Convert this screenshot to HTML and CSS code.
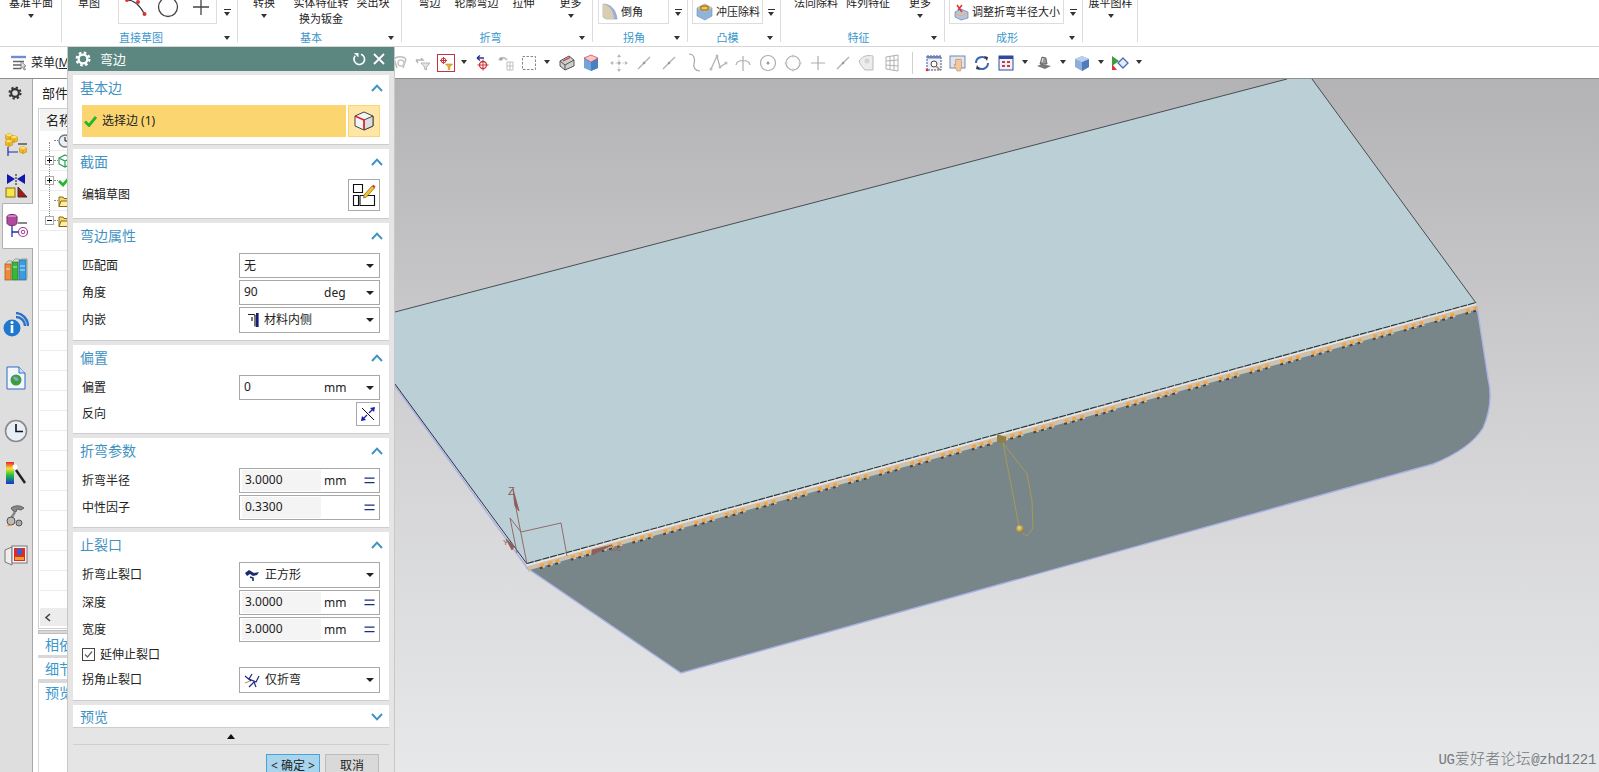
FILE: index.html
```html
<!DOCTYPE html>
<html lang="zh-CN">
<head>
<meta charset="utf-8">
<title>弯边</title>
<link rel="stylesheet" href="styles.css">
</head>
<body>
<svg class="sprite" aria-hidden="true">
  <symbol id="gear" viewBox="0 0 16 16"><circle cx="8" cy="8" r="4.4" fill="none" stroke="currentColor" stroke-width="2.4"/><circle cx="8" cy="8" r="6.4" fill="none" stroke="currentColor" stroke-width="2.2" stroke-dasharray="2.6 2.42"/></symbol>
  <symbol id="chev-up" viewBox="0 0 12 8"><path d="M1 7 6 1.6 11 7" fill="none" stroke="#3f93c3" stroke-width="2"/></symbol>
  <symbol id="chev-down" viewBox="0 0 12 8"><path d="M1 1 6 6.4 11 1" fill="none" stroke="#3f93c3" stroke-width="2"/></symbol>
  <symbol id="eq" viewBox="0 0 11 7"><path d="M.5 1.2h10M.5 5.6h10" stroke="#1b2f7a" stroke-width="1.3"/></symbol>
  <symbol id="folder" viewBox="0 0 14 14"><path d="M1 3h4l1 1.500h4v8H1z" fill="#f8d66a" stroke="#8a6a10"/><path d="M3 7h10l-2 5.500H1z" fill="#fdeda6" stroke="#8a6a10"/></symbol>
  <symbol id="plus" viewBox="0 0 9 9"><rect x=".5" y=".5" width="8" height="8" fill="#fff" stroke="#aaa"/><path d="M2 4.500h5M4.500 2v5" stroke="#111"/></symbol>
  <symbol id="minus" viewBox="0 0 9 9"><rect x=".5" y=".5" width="8" height="8" fill="#fff" stroke="#aaa"/><path d="M2 4.500h5" stroke="#111"/></symbol>
  <symbol id="gline" viewBox="0 0 20 20"><path d="M4 16 16 4" stroke="#aeaeae" stroke-width="1.200"/><circle cx="10" cy="10" r="1.300" fill="#999"/></symbol>
  <symbol id="ycube" viewBox="0 0 10 10"><path d="M5 .5 9.500 2.500v5L5 9.500.5 7.500v-5z" fill="#f2b91e" stroke="#b07c10" stroke-width=".6"/><path d="M.5 2.500 5 4.500l4.500-2L5 .5z" fill="#fbe27a"/><path d="M5 4.500v5" stroke="#b07c10" stroke-width=".6"/></symbol>
</svg>

<header class="ribbon">
  <section class="group g1">
    <div class="tools">
      <div class="tool w62"><span class="tool-text">基准平面</span><i class="caret"></i></div>
    </div>
    <div class="group-label"></div>
  </section>
  <section class="group g2">
    <div class="tools">
      <div class="tool w54"><span class="tool-text">草图</span></div>
      <div class="box sketch-box">
        <svg width="99" height="24" viewBox="0 0 99 24">
          <path d="M8 0C14 0 20 4 25.500 14" fill="none" stroke="#333" stroke-width="1.200"/>
          <circle cx="8" cy="0" r="2" fill="#d8343a"/><circle cx="19" cy="2" r="2" fill="#d8343a"/><circle cx="25.500" cy="14" r="2" fill="#d8343a"/>
          <circle cx="49" cy="7" r="9.500" fill="none" stroke="#444" stroke-width="1.300"/>
          <path d="M74 7h16M82 -1v16" stroke="#444" stroke-width="1.300"/>
        </svg>
      </div>
      <div class="more-cell"><i class="more-line"></i></div>
    </div>
    <div class="group-label"><span>直接草图</span><i class="caret"></i></div>
  </section>
  <section class="group g3">
    <div class="tools">
      <div class="tool w52"><span class="tool-text">转换</span><i class="caret"></i></div>
      <div class="tool w62"><span class="tool-text wrap">实体特征转换为钣金</span></div>
      <div class="tool w42"><span class="tool-text">突出块</span></div>
    </div>
    <div class="group-label"><span>基本</span><i class="caret"></i></div>
  </section>
  <section class="group g4">
    <div class="tools">
      <div class="tool w47"><span class="tool-text">弯边</span></div>
      <div class="tool w47"><span class="tool-text">轮廓弯边</span></div>
      <div class="tool w47"><span class="tool-text">拉伸</span></div>
      <div class="tool w47"><span class="tool-text">更多</span><i class="caret"></i></div>
    </div>
    <div class="group-label"><span>折弯</span><i class="caret"></i></div>
  </section>
  <section class="group g5">
    <div class="tools">
      <div class="box combo w71">
        <svg width="16" height="18" viewBox="0 0 16 18"><path d="M1 1C8 1 14 6 15 16H4L1 14z" fill="#9db4d8" stroke="#8090b8" stroke-width=".6"/><path d="M1 1C7 2 11 7 12 16H4L1 14z" fill="#d9cdb0"/></svg>
        <span>倒角</span>
      </div>
      <div class="more-cell"><i class="more-line"></i></div>
    </div>
    <div class="group-label"><span>拐角</span><i class="caret"></i></div>
  </section>
  <section class="group g6">
    <div class="tools">
      <div class="box combo w71">
        <svg width="17" height="18" viewBox="0 0 17 18"><path d="M1 5 9 1l7 4v8l-7 4-8-4z" fill="#8fb4dc" stroke="#7090b8" stroke-width=".6"/><path d="M1 5 9 1l7 4-7 4z" fill="#e8c46e"/><ellipse cx="8.500" cy="5" rx="4" ry="2.200" fill="none" stroke="#a87620" stroke-width="1.300"/></svg>
        <span>冲压除料</span>
      </div>
      <div class="more-cell"><i class="more-line"></i></div>
    </div>
    <div class="group-label"><span>凸模</span><i class="caret"></i></div>
  </section>
  <section class="group g7">
    <div class="tools">
      <div class="tool w52"><span class="tool-text">法向除料</span></div>
      <div class="tool w52"><span class="tool-text">阵列特征</span></div>
      <div class="tool w52"><span class="tool-text">更多</span><i class="caret"></i></div>
    </div>
    <div class="group-label"><span>特征</span><i class="caret"></i></div>
  </section>
  <section class="group g8">
    <div class="tools">
      <div class="box combo w115">
        <svg width="16" height="18" viewBox="0 0 16 18"><path d="M2 9 8 6l7 3v6l-7 2-6-3z" fill="#b8c4de" stroke="#6c7ca8" stroke-width=".7"/><path d="M4 2 9 9M9 2 5 7" stroke="#d8343a" stroke-width="1.500"/><path d="M3 11l5 2 6-3" fill="none" stroke="#e7b35a"/></svg>
        <span>调整折弯半径大小</span>
      </div>
      <div class="more-cell"><i class="more-line"></i></div>
    </div>
    <div class="group-label"><span>成形</span><i class="caret"></i></div>
  </section>
  <section class="group g9">
    <div class="tools">
      <div class="tool w55"><span class="tool-text">展平图样</span><i class="caret"></i></div>
    </div>
    <div class="group-label"></div>
  </section>
</header>

<nav class="toolbar">
  <div class="tb-menu">
    <svg width="18" height="16" viewBox="0 0 18 16"><path d="M1 2h15" stroke="#6d8fd0" stroke-width="2.400"/><path d="M3 6.500h11M3 10h9M3 13.500h8" stroke="#666" stroke-width="1.400"/><path d="M11 6l5 5-2 .5 1.500 3-1.500.5-1.300-3-1.700 1.500z" fill="#ddd" stroke="#555" stroke-width=".6"/></svg>
    <span>菜单(<u>M</u>)</span>
  </div>
  <div class="tb-icons">
    <span class="ti"><svg width="18" height="18" viewBox="0 0 18 18"><path d="M3 5c3-3 9-3 12 0M3 5l3 9M15 5l-3 9" fill="none" stroke="#bdbdbd" stroke-width="1.500"/><circle cx="10" cy="9" r="3" fill="none" stroke="#c8c8c8" stroke-width="1.500"/></svg></span>
    <span class="ti"><svg width="18" height="18" viewBox="0 0 18 18"><path d="M2 6h7l-2-2M2 6l2 3" fill="none" stroke="#b4b4b4" stroke-width="1.400"/><path d="M7 9h9l-3.500 4v3l-2-1v-2z" fill="#e5e5e5" stroke="#b4b4b4"/></svg></span>
    <span class="ti"><svg class="framed" width="16" height="16" viewBox="0 0 16 16"><path d="M5.500 2v7M2 5.500h7" stroke="#c43a3a"/><circle cx="5.500" cy="5.500" r="2.400" fill="none" stroke="#c43a3a"/><path d="M7.500 9h7l-2.700 3v2.500h-1.500V12z" fill="#e8b22e" stroke="#a87a10" stroke-width=".5"/></svg></span>
    <i class="tc"></i>
    <span class="ti"><svg width="18" height="18" viewBox="0 0 18 18"><path d="M3 4h7M3 4l3-2.500M3 4l3 2.500" fill="none" stroke="#233a8c" stroke-width="1.400"/><circle cx="9" cy="11" r="3.500" fill="none" stroke="#c8323a" stroke-width="1.300"/><path d="M9 5.500v11M3.500 11h11" stroke="#c8323a"/></svg></span>
    <span class="ti"><svg width="18" height="18" viewBox="0 0 18 18"><path d="M2 6c2-3 6-3 8 0" fill="none" stroke="#c4c4c4" stroke-width="2"/><circle cx="4" cy="5" r="1.800" fill="#aaa"/><path d="M10 8h6v8h-6zM10 12h6M13 8v8" fill="none" stroke="#c0c0c0"/></svg></span>
    <span class="ti"><svg width="16" height="16" viewBox="0 0 16 16"><rect x="1.500" y="1.500" width="13" height="13" fill="none" stroke="#888" stroke-dasharray="2.500 1.500"/></svg></span>
    <i class="tc"></i>
  </div>
  <div class="tb-icons tb-cubes">
    <span class="ti24"><svg width="18" height="18" viewBox="0 0 18 18"><path d="M2 7 11 2l5 4v6l-9 4-5-4z" fill="#cfcfcf" stroke="#555"/><path d="M2 7l5 4 9-5M7 11v5" fill="none" stroke="#555"/><path d="M5 7l7-3.500" stroke="#d8343a" stroke-width="1.300"/></svg></span>
    <span class="ti24"><svg width="18" height="18" viewBox="0 0 18 18"><path d="M2 4 9 1l7 3v10l-7 3-7-3z" fill="#6fa6dc"/><path d="M9 8 16 4v10l-7 3z" fill="#4a7fc0"/><path d="M2 4 9 1l7 3-7 4z" fill="#f3c8c8" stroke="#d8343a" stroke-width=".6"/></svg></span>
  </div>
  <div class="tb-icons tb-grey">
    <span class="tw"><svg width="20" height="20" viewBox="0 0 20 20"><path d="M10 3v14M3 10h14" stroke="#ccc" stroke-dasharray="2 1.500"/><path d="M10 1l2 3h-4zM10 19l2-3h-4zM1 10l3-2v4zM19 10l-3-2v4z" fill="#b8b8b8"/><circle cx="10" cy="10" r="1.500" fill="#aaa"/></svg></span>
    <span class="tw"><svg width="20" height="20"><use href="#gline"/></svg></span>
    <span class="tw"><svg width="20" height="20"><use href="#gline"/></svg></span>
    <span class="tw"><svg width="20" height="20" viewBox="0 0 20 20"><path d="M5 1c6 0 6 7 5 10s1 7 6 7" fill="none" stroke="#a8a8a8" stroke-width="1.200"/></svg></span>
    <span class="tw"><svg width="20" height="20" viewBox="0 0 20 20"><path d="M2 16 8 3l3 11 6-4" fill="none" stroke="#aeaeae" stroke-width="1.200"/><circle cx="8" cy="3" r="1.500" fill="#bbb"/><circle cx="11" cy="14" r="1.500" fill="#bbb"/><circle cx="17" cy="10" r="1.500" fill="#bbb"/><circle cx="2" cy="16" r="1.500" fill="#bbb"/></svg></span>
    <span class="tw"><svg width="20" height="20" viewBox="0 0 20 20"><path d="M3 12c1-6 13-6 14 0M10 3v15" fill="none" stroke="#aeaeae" stroke-width="1.200"/></svg></span>
    <span class="tw"><svg width="20" height="20" viewBox="0 0 20 20"><circle cx="10" cy="10" r="7.500" fill="none" stroke="#aeaeae" stroke-width="1.200"/><circle cx="10" cy="10" r="1.500" fill="#999"/></svg></span>
    <span class="tw"><svg width="20" height="20" viewBox="0 0 20 20"><circle cx="10" cy="10" r="7" fill="none" stroke="#aeaeae" stroke-width="1.200"/><circle cx="10" cy="3" r="1.500" fill="#ccc"/><circle cx="17" cy="10" r="1.500" fill="#ccc"/><circle cx="10" cy="17" r="1.500" fill="#ccc"/><circle cx="3" cy="10" r="1.500" fill="#ccc"/></svg></span>
    <span class="tw"><svg width="20" height="20" viewBox="0 0 20 20"><path d="M10 3v14M3 10h14" stroke="#aeaeae" stroke-width="1.200"/></svg></span>
    <span class="tw"><svg width="20" height="20"><use href="#gline"/></svg></span>
    <span class="tw"><svg width="20" height="20" viewBox="0 0 20 20"><path d="M2 8c4-6 10-6 14-5v14H8C5 14 3 11 2 8z" fill="#ececec" stroke="#bbb"/><circle cx="10" cy="8" r="2.500" fill="#d4d4d4"/></svg></span>
    <span class="tw"><svg width="20" height="20" viewBox="0 0 20 20"><path d="M4 4l12-2v16l-12-2zM8 3.500v13M12 3v14M4 8l12-1M4 12l12 1" fill="none" stroke="#b0b0b0"/></svg></span>
  </div>
  <i class="tb-sep"></i>
  <div class="tb-icons">
    <span class="ti24"><svg width="18" height="18" viewBox="0 0 18 18"><rect x="2" y="2" width="14" height="14" fill="#eef2f8" stroke="#3b4fa8" stroke-dasharray="2 1"/><rect x="2" y="2" width="14" height="2.500" fill="#6d80b8"/><circle cx="9" cy="10" r="3" fill="#fff" stroke="#444"/><path d="M11 12l4 4" stroke="#b88a30" stroke-width="1.600"/><circle cx="2" cy="16" r="1.300" fill="#d8343a"/></svg></span>
    <span class="ti24"><svg width="18" height="18" viewBox="0 0 18 18"><rect x="1" y="2" width="15" height="12" fill="#dfe5f0" stroke="#7a88a8"/><path d="M8 17 5 11c0-1 1-1 1.500 0V6c0-1 1.500-1 1.500 0 0-1 1.500-1 1.500 0 0-1 1.500-1 1.500 0 0-1 1.500-1 1.500 .5V13l-1 4z" fill="#f2c89a" stroke="#a87a50" stroke-width=".5"/></svg></span>
    <span class="ti24"><svg width="18" height="18" viewBox="0 0 18 18"><path d="M3 9a6 6 0 0 1 10-4.500M15 9a6 6 0 0 1-10 4.500" fill="none" stroke="#3c66b8" stroke-width="2"/><path d="M11 2l4 1-1 4zM7 16l-4-1 1-4z" fill="#333"/></svg></span>
    <span class="ti24"><svg width="18" height="18" viewBox="0 0 18 18"><rect x="2" y="2" width="14" height="14" fill="#eef2fa" stroke="#334a9c"/><rect x="2" y="2" width="14" height="3" fill="#334a9c"/><path d="M5 7h3v2H5zM10 7h3v2h-3zM5 11h3v2H5zM10 11h3v2h-3z" fill="#d8343a"/></svg></span>
    <i class="tc wide"></i>
    <span class="ti18"><svg width="18" height="18" viewBox="0 0 18 18"><path d="M2 12l5-2 9 2-6 3z" fill="#777"/><path d="M5 10l2-7 4 1 1 6z" fill="#999" stroke="#444" stroke-width=".7"/><path d="M8 4l-1 4" stroke="#eee"/></svg></span>
    <i class="tc wide"></i>
    <span class="ti18"><svg width="18" height="18" viewBox="0 0 18 18"><path d="M2 5l7-3 7 3v8l-7 4-7-4z" fill="#8eaedc"/><path d="M9 8l7-3v8l-7 4z" fill="#4f7bbd"/><path d="M2 5l7-3 7 3-7 3z" fill="#bcd0ee"/></svg></span>
    <i class="tc wide"></i>
    <span class="ti18"><svg width="18" height="18" viewBox="0 0 18 18"><path d="M1 2l7 5-7 5z" fill="#3f9c3f"/><path d="M1 10l5 6H1z" fill="#d8343a"/><path d="M12 4l5 5-5 5-5-5z" fill="#e4ecfa" stroke="#4a6bb8" stroke-width="1.300"/></svg></span>
    <i class="tc wide"></i>
  </div>
</nav>

<main class="workspace">
  <aside class="resource-bar">
    <span class="res r-gear"><svg class="dark" width="14" height="14"><use href="#gear"/></svg></span>
    <span class="res r-41"><svg width="24" height="24" viewBox="0 0 24 24"><use href="#ycube" x="1" y="0" width="8" height="8"/><use href="#ycube" x="6" y="2" width="8" height="8"/><use href="#ycube" x="1" y="6" width="8" height="8"/><use href="#ycube" x="15" y="13" width="8" height="8"/><path d="M4 14v9M4 19h10" stroke="#1b2fb0" stroke-width="1.200"/><path d="M14 11h9" stroke="#111"/></svg></span>
    <span class="res r-41"><svg width="24" height="24" viewBox="0 0 24 24"><path d="M3 0l8 5-8 5zM21 0l-8 5 8 5z" fill="#1416b0"/><path d="M12 0v12" stroke="#111" stroke-dasharray="2 1"/><rect x="2" y="14" width="9" height="9" fill="#f6e64a" stroke="#8a6a10"/><path d="M14 23V13l9 10z" fill="#b01418" stroke="#333"/></svg></span>
    <span class="res r-tab"><svg width="24" height="26" viewBox="0 0 24 26"><ellipse cx="7" cy="4" rx="5" ry="2.500" fill="#d08ac0" stroke="#7a2a70"/><path d="M2 4v6c0 1.500 2 2.500 5 2.500s5-1 5-2.500V4" fill="#b04a9c" stroke="#7a2a70"/><path d="M7 13v11M7 19h6" stroke="#1b2fb0" stroke-width="1.300"/><path d="M13 10h9" stroke="#111"/><circle cx="18" cy="19" r="4.500" fill="none" stroke="#a03a90" stroke-width="1.200"/><circle cx="18" cy="19" r="1.800" fill="none" stroke="#a03a90"/></svg></span>
    <span class="res r-42"><svg width="24" height="24" viewBox="0 0 24 24"><rect x="1" y="6" width="6" height="16" fill="#ef8a3a" stroke="#a0551a" stroke-width=".7"/><rect x="8" y="4" width="6" height="18" fill="#3cb43c" stroke="#1f7a1f" stroke-width=".7"/><rect x="15" y="2" width="7" height="20" fill="#3d9ce0" stroke="#1f6aa0" stroke-width=".7"/><path d="M1 6l3-3h4M8 4l3-3h4M15 2l3-1h5v19l-1 2" fill="none" stroke="#6d8a6d" stroke-width=".7"/><path d="M16 8h5M16 12h5M9 9h4M2 11h4" stroke="#fff" stroke-width=".7"/></svg></span>
    <span class="res r-info"><svg width="26" height="26" viewBox="0 0 26 26"><path d="M13 5a9 9 0 0 1 9 9M13 1a13 13 0 0 1 12 13" fill="none" stroke="#2a72c8" stroke-width="2.400"/><circle cx="9" cy="16" r="8.500" fill="#1f78d0"/><circle cx="9" cy="10.500" r="1.500" fill="#fff"/><path d="M9 13v8" stroke="#fff" stroke-width="2.600"/></svg></span>
    <span class="res r-53"><svg width="20" height="24" viewBox="0 0 20 24"><path d="M1 1h12l6 6v16H1z" fill="#f2f6fd" stroke="#2a6ac8"/><path d="M13 1v6h6" fill="#cfe0f8" stroke="#2a6ac8"/><circle cx="10" cy="14" r="5.500" fill="#3f9c3f"/><path d="M7 11c3-1 5 0 6 3-2 2-5 1-6-3z" fill="#7aa6d8"/></svg></span>
    <span class="res r-53"><svg width="24" height="24" viewBox="0 0 24 24"><circle cx="12" cy="12" r="10.500" fill="#e8eef8" stroke="#8a8a8a" stroke-width="1.600"/><path d="M12 5v7.500h7" fill="none" stroke="#111" stroke-width="1.600"/></svg></span>
    <span class="res r-32"><svg width="22" height="24" viewBox="0 0 22 24"><defs><linearGradient id="rb" x1="0" y1="0" x2="0" y2="1"><stop offset="0" stop-color="#e8222a"/><stop offset=".3" stop-color="#f6e030"/><stop offset=".6" stop-color="#20c040"/><stop offset="1" stop-color="#1830d8"/></linearGradient></defs><rect x="1" y="1" width="8" height="22" fill="url(#rb)"/><path d="M11 9l9 13" stroke="#222" stroke-width="2.400"/><circle cx="10" cy="6" r="2.500" fill="#fff"/></svg></span>
    <span class="res r-54"><svg width="22" height="24" viewBox="0 0 22 24"><path d="M6 4c4-3 9-3 13 0l-3 2-4-1-1 3-3-1z" fill="#888" stroke="#444" stroke-width=".7"/><path d="M10 8 5 16" stroke="#888" stroke-width="2.400"/><circle cx="6" cy="17" r="4" fill="#bbb" stroke="#555"/><circle cx="14" cy="19" r="3" fill="#aaa" stroke="#555"/><path d="M1 22l5-2 1 2z" fill="#ee8a2a"/></svg></span>
    <span class="res r-26"><svg width="24" height="22" viewBox="0 0 24 22"><path d="M1 5l7-3v18l-7-3z" fill="#eee" stroke="#777"/><rect x="8" y="1" width="15" height="17" fill="#f4f4f4" stroke="#777"/><rect x="10" y="3" width="11" height="13" fill="#e02a2a"/><path d="M13 4h5v4l-2.500 3L13 8z" fill="#2a62d8"/><rect x="11" y="12" width="9" height="3" fill="#f0a030"/></svg></span>
  </aside>

  <aside class="nav">
    <div class="nav-title">部件导航器</div>
    <div class="tree">
      <div class="tree-head">名称</div>
      <div class="tree-rows">
        <div class="tr"><span class="tg"></span><span class="dots"></span><svg width="14" height="14" viewBox="0 0 14 14"><circle cx="7" cy="7" r="6" fill="#e8eef8" stroke="#777" stroke-width="1.300"/><path d="M7 3v4h3" fill="none" stroke="#111"/></svg></div>
        <div class="tr"><svg class="tg" width="9" height="9"><use href="#plus"/></svg><span class="dots"></span><svg width="14" height="14" viewBox="0 0 14 14"><path d="M7 1l6 3v6l-6 3-6-3V4zM1 4l6 3 6-3M7 7v6" fill="none" stroke="#20a050" stroke-width="1.200"/></svg></div>
        <div class="tr"><svg class="tg" width="9" height="9"><use href="#plus"/></svg><span class="dots"></span><svg width="14" height="14" viewBox="0 0 14 14"><path d="M1 7l4 4 7-8" fill="none" stroke="#24b82c" stroke-width="2.800"/></svg></div>
        <div class="tr"><span class="tg"></span><span class="dots"></span><svg width="14" height="14"><use href="#folder"/></svg></div>
        <div class="tr"><svg class="tg" width="9" height="9"><use href="#minus"/></svg><span class="dots"></span><svg width="14" height="14"><use href="#folder"/></svg></div>
        <div class="tr"></div><div class="tr"></div><div class="tr"></div><div class="tr"></div><div class="tr"></div>
        <div class="tr"></div><div class="tr"></div><div class="tr"></div><div class="tr"></div><div class="tr"></div>
        <div class="tr"></div><div class="tr"></div><div class="tr"></div><div class="tr"></div><div class="tr"></div>
        <div class="tr"></div><div class="tr"></div><div class="tr"></div><div class="tr"></div>
      </div>
      <div class="hscroll"><svg width="8" height="9" viewBox="0 0 8 9"><path d="M6 1 2 4.500 6 8" fill="none" stroke="#444" stroke-width="1.600"/></svg></div>
    </div>
    <div class="splitter"></div>
    <div class="accordion">相依性</div>
    <div class="accordion">细节</div>
    <div class="accordion last">预览</div>
  </aside>

  <div class="viewport">
    <svg class="scene" width="1204" height="694" viewBox="395 78 1204 694">
      <defs>
        <radialGradient id="ball" cx=".4" cy=".35" r=".7"><stop offset="0" stop-color="#ecdc90"/><stop offset="1" stop-color="#8c7424"/></radialGradient>
      </defs>
      <polygon points="395,311 1287,78 1312,78 1476,302 527,563 395,383" fill="#bbd0d6"/>
      <path d="M527 567 1477 306 1488 377Q1494 402 1483 427 1470 448 1433 463L681 672Z" fill="#78868a" stroke="#a9b2e6" stroke-width="1.400"/>
      <path d="M395 311 1287 78M1312 78 1476 302" stroke="#3b4044" fill="none" stroke-width=".9"/>
      <path d="M395 385 528 568" stroke="#a9b2e6" stroke-width="1.400"/>
      <path d="M395 383 527 563" stroke="#2e3440" stroke-width="1"/>
      <path d="M527 562.500 1476 301.500" stroke="#2b3033" stroke-width="1.100" stroke-dasharray="7 1"/>
      <path d="M527 564.300 1476 303.300" stroke="#e2eaea" stroke-width="1.300"/>
      <path d="M528 567.300 1477 306.300" stroke="#c8c4b4" stroke-width="4.200"/>
      <path d="M528 569.500 1477 308.500" stroke="#c8c4b4" stroke-width="3" stroke-dasharray="6 2 6 2 6 10" stroke-dashoffset="-11.600"/>
      <path d="M528 565.800 1477 304.800" stroke="#eab88e" stroke-width=".8"/>
      <path d="M528 568 1477 307" stroke="#f5a243" stroke-width="3" stroke-dasharray="4 4 4 4 4 12" stroke-dashoffset="-12.600"/>
      <path d="M528 570.500 1477 309.500" stroke="#3f4548" stroke-width="2" stroke-dasharray="3 5 3 5 3 13" stroke-dashoffset="-12.100"/>
      <g class="csys">
        <path d="M527 563 514 497M510 517 521 531 561 522 567 555M510 517 517 552" fill="none"/>
        <path d="M515 505 519 510 513 488z" class="solid"/>
        <path d="M506 538 512 549 514 545z" class="solid"/>
        <path d="M592 549 612 544 592 554z" class="solid"/>
        <text x="508" y="494">Z</text>
        <text x="503" y="544" class="axis-small">Y</text>
        <text x="611" y="550" class="axis-small">XC</text>
      </g>
      <path d="M1003 442 1019 525M1003 442 1027 473 1032 500 1033 527 1027 535 1023 532" fill="none" stroke="#a89a55"/>
      <polygon points="997,433 1006,436 1006,442 997,442" fill="#8f8048"/>
      <circle cx="1020" cy="528" r="3.800" fill="url(#ball)"/>
    </svg>
    <div class="watermark">UG<span class="wm-cjk">爱好者论坛</span>@zhd1221</div>
  </div>
</main>

<div class="dialog">
  <div class="dlg-title">
    <svg class="dlg-gear" width="16" height="16"><use href="#gear"/></svg>
    <span class="dlg-name">弯边</span>
    <svg width="14" height="14" viewBox="0 0 14 14"><path d="M9 2.200A5.300 5.300 0 1 1 3.200 3.800" fill="none" stroke="#fff" stroke-width="1.600"/><path d="M2 1h4.500v4.500z" fill="#fff"/></svg>
    <svg class="dlg-x" width="12" height="12" viewBox="0 0 12 12"><path d="M1 1l10 10M11 1 1 11" stroke="#fff" stroke-width="1.800"/></svg>
  </div>
  <div class="dlg-body">
    <section class="sec">
      <div class="sec-head"><h3>基本边</h3><svg width="12" height="8"><use href="#chev-up"/></svg></div>
      <div class="sel-row">
        <div class="sel-bar">
          <svg width="13" height="11" viewBox="0 0 13 11"><path d="M1 5.500 5 9.500 12 1" fill="none" stroke="#27b52e" stroke-width="2.800"/></svg>
          <span>选择边 (1)</span>
        </div>
        <div class="sel-btn"><svg width="22" height="22" viewBox="0 0 22 22"><path d="M2 6 11 2l9 4v10l-9 4-9-4z" fill="#f4f4f4" stroke="#444"/><path d="M11 10 20 6v10l-9 4z" fill="#ddd" stroke="#444"/><path d="M2 6l9 4v10" fill="none" stroke="#d8252a" stroke-width="1.500"/></svg></div>
      </div>
    </section>
    <section class="sec">
      <div class="sec-head"><h3>截面</h3><svg width="12" height="8"><use href="#chev-up"/></svg></div>
      <div class="row row-32">
        <span>编辑草图</span>
        <div class="icon-btn big"><svg width="24" height="24" viewBox="0 0 24 24"><path d="M1.500 1.500h9v8h-9zM1.500 12.500h5v10h-5zM8 12.500h14.500v10H8z" fill="none" stroke="#111" stroke-width="1.100"/><path d="M12 12l8-9 2.500 2-8 9-3 1z" fill="#f4c030" stroke="#8a5a10" stroke-width=".7"/><path d="M20 3l2.500 2 1-1.500-2-1.800z" fill="#d8343a"/></svg></div>
      </div>
    </section>
    <section class="sec">
      <div class="sec-head"><h3>弯边属性</h3><svg width="12" height="8"><use href="#chev-up"/></svg></div>
      <div class="rows">
        <div class="row"><span>匹配面</span><div class="field"><span class="grow">无</span><i class="dd"></i></div></div>
        <div class="row"><span>角度</span><div class="field"><span class="val">90</span><span class="grow">deg</span><i class="dd"></i></div></div>
        <div class="row row-26"><span>内嵌</span><div class="field"><svg class="opt-ic" width="12" height="14" viewBox="0 0 12 14"><path d="M1 1.500h6l1 1v11" fill="none" stroke="#222" stroke-width="1.200"/><path d="M5 4v4" stroke="#222" stroke-width="1.200"/><rect x="9" y="0" width="2.600" height="14" fill="#151f7a"/></svg><span class="grow">材料内侧</span><i class="dd"></i></div></div>
      </div>
    </section>
    <section class="sec">
      <div class="sec-head"><h3>偏置</h3><svg width="12" height="8"><use href="#chev-up"/></svg></div>
      <div class="rows">
        <div class="row"><span>偏置</span><div class="field"><span class="val">0</span><span class="grow">mm</span><i class="dd"></i></div></div>
        <div class="row row-24"><span>反向</span><div class="icon-btn"><svg width="16" height="16" viewBox="0 0 16 16"><path d="M2 2l12 12" stroke="#111"/><path d="M14 2 9 7" stroke="#1c22a8" stroke-width="1.300"/><path d="M7 9 2 14" stroke="#1c22a8" stroke-width="1.300"/><path d="M15 1l-1 5-4-4zM1 15l1-5 4 4z" fill="#1c22a8"/></svg></div></div>
      </div>
    </section>
    <section class="sec">
      <div class="sec-head"><h3>折弯参数</h3><svg width="12" height="8"><use href="#chev-up"/></svg></div>
      <div class="rows">
        <div class="row"><span>折弯半径</span><div class="field expr"><span class="val">3.0000</span><span class="grow">mm</span><svg class="eq" width="11" height="7"><use href="#eq"/></svg></div></div>
        <div class="row"><span>中性因子</span><div class="field expr"><span class="val">0.3300</span><span class="grow"></span><svg class="eq" width="11" height="7"><use href="#eq"/></svg></div></div>
      </div>
    </section>
    <section class="sec">
      <div class="sec-head"><h3>止裂口</h3><svg width="12" height="8"><use href="#chev-up"/></svg></div>
      <div class="rows">
        <div class="row row-26"><span>折弯止裂口</span><div class="field"><svg class="opt-ic ic-16" width="16" height="13" viewBox="0 0 16 13"><path d="M1 4 5 1l5 3 5-1-2 3-4 1-3-2-3 2z" fill="#1c2a70"/><path d="M6 8l3 1v3" fill="none" stroke="#1c2a70" stroke-width="1.600"/></svg><span class="grow">正方形</span><i class="dd"></i></div></div>
        <div class="row"><span>深度</span><div class="field expr"><span class="val">3.0000</span><span class="grow">mm</span><svg class="eq" width="11" height="7"><use href="#eq"/></svg></div></div>
        <div class="row"><span>宽度</span><div class="field expr"><span class="val">3.0000</span><span class="grow">mm</span><svg class="eq" width="11" height="7"><use href="#eq"/></svg></div></div>
        <div class="check-row"><span class="checkbox"><svg width="11" height="11" viewBox="0 0 11 11"><path d="M2 5.500 4.500 8 9 2.500" fill="none" stroke="#666" stroke-width="1.200"/></svg></span><span>延伸止裂口</span></div>
        <div class="row row-26"><span>拐角止裂口</span><div class="field"><svg class="opt-ic ic-16" width="16" height="15" viewBox="0 0 16 15"><path d="M1 3l6 5M8 1l-3 5 7 3 3-6M5 14l5-5 2 5" fill="none" stroke="#1c2a80" stroke-width="1.200"/><path d="M1 10l5-2" stroke="#d08a30"/></svg><span class="grow">仅折弯</span><i class="dd"></i></div></div>
      </div>
    </section>
    <section class="sec sec-closed">
      <div class="sec-head"><h3>预览</h3><svg width="12" height="8"><use href="#chev-down"/></svg></div>
    </section>
    <div class="collapse-row"><i class="tri-up"></i></div>
    <div class="dlg-actions">
      <button class="btn primary" type="button">&lt; 确定 &gt;</button>
      <button class="btn" type="button">取消</button>
    </div>
  </div>
</div>
</body>
</html>
```
FILE: styles.css
```css
* { box-sizing: border-box; }
html, body { margin: 0; padding: 0; }
body {
  width: 1599px;
  height: 772px;
  overflow: hidden;
  position: relative;
  display: flex;
  flex-direction: column;
  background: #fff;
  color: #222;
  font: 12px/16px "Noto Sans", "Noto Sans CJK SC", sans-serif;
}
.sprite { position: absolute; width: 0; height: 0; }
i { display: block; }

/* ribbon */
.ribbon {
  flex: none;
  height: 47px;
  display: flex;
  overflow: hidden;
  background: #fff;
  border-bottom: 1px solid #d6d6d6;
  font-size: 11px;
}
.group {
  flex: none;
  height: 42px;
  display: flex;
  flex-direction: column;
  border-right: 1px solid #dcdcdc;
}
.g1 { width: 62px; }
.g2 { width: 176px; }
.g3 { width: 164px; }
.g4 { width: 191px; padding-left: 4px; }
.g5 { width: 95px; padding-left: 5px; }
.g6 { width: 93px; padding-left: 4px; }
.g7 { width: 164px; padding-left: 9px; }
.g8 { width: 138px; padding-left: 4px; }
.g9 { width: 55px; }
.tools { height: 31px; display: flex; align-items: flex-start; flex: none; }
.tool { display: flex; flex-direction: column; align-items: center; flex: none; }
.tool-text { margin-top: -5px; white-space: nowrap; text-align: center; }
.tool-text.wrap { white-space: normal; width: 56px; }
.caret {
  width: 0; height: 0;
  margin-top: 3px;
  border: 3.5px solid transparent;
  border-top: 4px solid #333;
  border-bottom: 0;
}
.w42 { width: 42px; } .w47 { width: 47px; } .w52 { width: 52px; }
.w54 { width: 54px; } .w55 { width: 55px; } .w62 { width: 62px; }
.w71 { width: 71px; } .w115 { width: 115px; }
.box {
  height: 24px;
  flex: none;
  border: 1px solid #ddd;
  border-top: 0;
  background: #fff;
}
.sketch-box { width: 99px; margin-left: 2px; }
.combo { display: flex; align-items: center; gap: 3px; padding-left: 3px; white-space: nowrap; font-size: 11px; }
.more-cell { flex: 1; height: 24px; display: flex; align-items: center; justify-content: center; }
.more-line {
  width: 7px; height: 7px;
  border-top: 1px solid #333;
  position: relative;
}
.more-line::after {
  content: "";
  display: block;
  margin-top: 2px;
  width: 0; height: 0;
  border: 3.500px solid transparent;
  border-top: 4px solid #333;
  border-bottom: 0;
}
.group-label { height: 14px; line-height: 14px; display: flex; align-items: center; color: #3a97cc; }
.group-label span { flex: 1; text-align: center; }
.group-label .caret { margin: 0 7px 0 4px; }

/* quick toolbar */
.toolbar {
  flex: none;
  height: 32px;
  display: flex;
  align-items: center;
  background: #fff;
  border-bottom: 1px solid #8f8f8f;
  box-shadow: 0 1px 0 #c9c9c9;
}
.tb-menu { width: 388px; flex: none; display: flex; align-items: center; gap: 3px; padding-left: 10px; }
.tb-menu u { text-decoration: underline; }
.tb-icons { display: flex; align-items: center; flex: none; }
.ti, .ti24, .ti18, .tw { display: flex; align-items: center; justify-content: center; flex: none; height: 24px; }
.ti { width: 23px; }
.ti24 { width: 24px; }
.ti18 { width: 24px; }
.tw { width: 24.8px; }
.tc, .tc.wide {
  flex: none;
  width: 14px;
  height: 5px;
  position: relative;
}
.tc::after {
  content: "";
  display: block;
  width: 0; height: 0;
  margin: 0 auto;
  border: 3px solid transparent;
  border-top: 4px solid #333;
  border-bottom: 0;
}
.framed { outline: 1px solid #c8323a; outline-offset: 0; }
.tb-cubes { margin-left: 1px; }
.tb-grey { margin-left: 4px; }
.tb-sep { width: 1px; height: 22px; background: #d0d0d0; margin: 0 9px 0 7px; flex: none; }

/* workspace */
.workspace { flex: 1; display: flex; min-height: 0; }
.resource-bar {
  flex: none;
  width: 33px;
  background: #dedede;
  border-right: 1px solid #a8a8a8;
  display: flex;
  flex-direction: column;
  align-items: stretch;
}
.res { display: flex; align-items: center; justify-content: center; flex: none; }
.dark { color: #333; }
.r-gear { height: 28px; margin-bottom: 17px; padding-right: 3px; }
.r-41 { height: 41px; }
.r-tab {
  height: 46px;
  margin: -3px -1px 0 2px;
  padding: 0 3px 0 0;
  background: #fff;
  border: 1px solid #b0b0b0;
  border-right: 0;
  border-radius: 2px 0 0 2px;
}
.r-42 { height: 42px; }
.r-info { height: 53px; margin-top: 7px; }
.r-53 { height: 53px; }
.r-32 { height: 32px; }
.r-54 { height: 54px; }
.r-26 { height: 26px; }

.nav {
  flex: none;
  width: 362px;
  background: #fff;
  padding-left: 5px;
  display: flex;
  flex-direction: column;
}
.nav-title { height: 29px; line-height: 28px; padding-left: 4px; font-size: 13px; }
.tree { height: 521px; border: 1px solid #cfcfcf; border-right: 0; padding-left: 1px; }
.tree-head { height: 22px; line-height: 22px; padding-left: 6px; background: #f3f3f3; font-size: 13px; }
.tree-rows { height: 477px; overflow: hidden; position: relative; }
.tree-rows::before {
  content: "";
  position: absolute;
  left: 9px;
  top: 11px;
  height: 76px;
  border-left: 1px dotted #888;
}
.tr { height: 20px; border-bottom: 1px solid #ececec; display: flex; align-items: center; padding-left: 5px; }
.tg { width: 9px; height: 9px; flex: none; position: relative; }
.dots { width: 4px; border-top: 1px dotted #888; flex: none; }
.hscroll { height: 18px; background: #ececec; display: flex; align-items: center; padding-left: 4px; }
.splitter { height: 4px; margin-top: 1px; background: #d9d9d9; border: 1px solid #bdbdbd; }
.accordion {
  height: 24px;
  line-height: 21px;
  padding-left: 7px;
  color: #3a97cc;
  font-size: 14px;
  border-bottom: 3px solid #d8d8d8;
  flex: none;
}
.accordion.last { flex: 1; border: 1px solid #d8d8d8; border-bottom: 0; line-height: 20px; padding-left: 6px; }

.viewport {
  flex: 1;
  position: relative;
  overflow: hidden;
  background: linear-gradient(#b3b3b5 0%, #d2d2d4 50%, #e7e8ea 100%);
}
.scene { display: block; }
.csys { stroke: #8f5d5d; fill: #8f5d5d; font: 11px "Liberation Sans", sans-serif; }
.csys path { stroke-width: .9; }
.csys text { stroke: none; }
.csys .axis-small { font-size: 8px; }
.watermark {
  position: absolute;
  right: 3px;
  bottom: 4px;
  font: 14px/16px "Liberation Mono", monospace;
  color: #75797c;
  white-space: nowrap;
  letter-spacing: -.3px;
}
.wm-cjk { font: 300 15px/16px "Noto Sans CJK SC", sans-serif; letter-spacing: .3px; }

/* dialog */
.dialog {
  position: absolute;
  left: 67px;
  top: 47px;
  width: 328px;
  height: 725px;
  background: #e5e5e5;
  border-right: 1px solid #c8c8c8;
  border-left: 1px solid #c8c8c8;
  overflow: hidden;
}
.dlg-title {
  height: 24px;
  background: #5c8680;
  color: #fff;
  display: flex;
  align-items: center;
  gap: 6px;
  padding: 0 9px 0 7px;
}
.dlg-gear { margin-right: 3px; }
.dlg-name { flex: 1; font-size: 13px; }
.dlg-x { margin-left: 1px; }
.dlg-body { padding: 4px 5px 0; display: flex; flex-direction: column; gap: 4px; }
.sec {
  background: #fff;
  padding: 0 9px 7px;
  border-bottom: 1px solid #cdcdcd;
  flex: none;
}
.sec-closed { padding-bottom: 0; height: 23px; }
.sec-head { height: 30px; display: flex; align-items: center; justify-content: space-between; margin: 0 -3px 0 -2px; padding-bottom: 4px; }
.sec-closed .sec-head { height: 23px; padding-bottom: 0; }
.sec-head h3 { margin: 0; font-size: 14px; font-weight: 400; color: #3f93c3; }
.sel-row { display: flex; gap: 2px; height: 32px; }
.sel-bar { flex: 1; background: #fbd670; display: flex; align-items: center; gap: 5px; padding-left: 2px; }
.sel-btn { width: 32px; background: #fde6a8; border: 1px solid #fbd670; display: flex; align-items: center; justify-content: center; }
.rows { display: flex; flex-direction: column; gap: 2px; }
.row { height: 25px; display: flex; align-items: center; justify-content: space-between; }
.row-26 { height: 26px; }
.row-24 { height: 24px; }
.row-32 { height: 32px; }
.field {
  width: 141px;
  height: 100%;
  border: 1px solid #a8a8a8;
  display: flex;
  align-items: center;
  padding: 0 6px 0 4px;
  background: #fff;
}
.field .val { width: 80px; flex: none; padding-bottom: 2px; }
.field .grow { flex: 1; }
.field.expr { padding-left: 2px; }
.field.expr .val { align-self: stretch; margin: 1px 3px 1px 0; width: 79px; padding: 0 0 2px 3px; background: #f4f4f4; line-height: 20px; }
.dd { width: 0; height: 0; flex: none; margin-right: -1px; border: 4px solid transparent; border-top: 4px solid #222; border-bottom: 0; }
.opt-ic { flex: none; margin: 0 5px 0 3px; }
.ic-16 { margin: 0 5px 0 0; }
.eq { flex: none; margin-right: -2px; }
.icon-btn {
  width: 24px;
  height: 24px;
  border: 1px solid #a8a8a8;
  display: flex;
  align-items: center;
  justify-content: center;
  background: #fff;
}
.icon-btn.big { width: 32px; height: 32px; }
.check-row { height: 21px; display: flex; align-items: center; gap: 5px; }
.checkbox { width: 13px; height: 13px; border: 1px solid #444; display: flex; align-items: center; justify-content: center; background: #fff; }
.collapse-row { height: 17px; margin-top: -4px; padding-top: 1px; border-bottom: 1px solid #cfcfcf; display: flex; align-items: center; justify-content: center; flex: none; }
.tri-up { width: 0; height: 0; border: 4.500px solid transparent; border-bottom: 5px solid #111; border-top: 0; }
.dlg-actions { display: flex; justify-content: flex-end; gap: 5px; padding: 5px 10px 0 0; }
.btn {
  width: 54px;
  height: 24px;
  padding: 0;
  border: 1px solid #bcbcbc;
  background: #d9d9d9;
  color: #222;
  font: inherit;
}
.btn.primary { background: #a8d4ec; border-color: #4ba3d3; }
```
